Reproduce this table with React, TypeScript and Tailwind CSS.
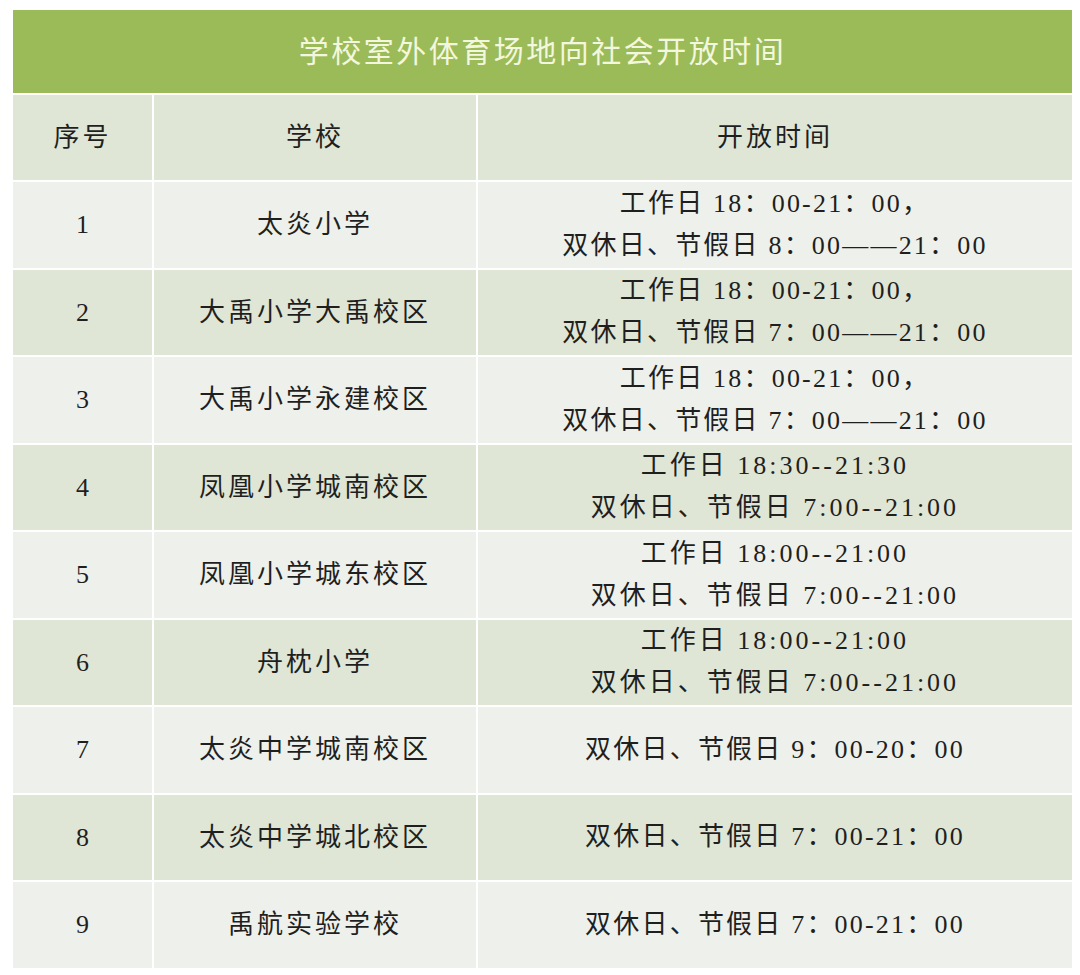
const rows = [
  { no: '1', school: '太炎小学', time: ['工作日 18：00-21：00，', '双休日、节假日 8：00——21：00'] },
  { no: '2', school: '大禹小学大禹校区', time: ['工作日 18：00-21：00，', '双休日、节假日 7：00——21：00'] },
  { no: '3', school: '大禹小学永建校区', time: ['工作日 18：00-21：00，', '双休日、节假日 7：00——21：00'] },
  { no: '4', school: '凤凰小学城南校区', time: ['工作日 18:30--21:30', '双休日、节假日 7:00--21:00'] },
  { no: '5', school: '凤凰小学城东校区', time: ['工作日 18:00--21:00', '双休日、节假日 7:00--21:00'] },
  { no: '6', school: '舟枕小学', time: ['工作日 18:00--21:00', '双休日、节假日 7:00--21:00'] },
  { no: '7', school: '太炎中学城南校区', time: ['双休日、节假日 9：00-20：00'] },
  { no: '8', school: '太炎中学城北校区', time: ['双休日、节假日 7：00-21：00'] },
  { no: '9', school: '禹航实验学校', time: ['双休日、节假日 7：00-21：00'] },
];

const font = { fontFamily: '"Liberation Serif", "Noto Sans CJK SC", serif' };

export default function App() {
  return (
    <div className="min-h-[975px] w-[1080px] bg-white pt-[10px] pl-[13px]" style={font}>
      <div className="w-[1059px]">
        {/* Title bar */}
        <div className="flex h-[83px] items-center justify-center bg-[#9bbb59] text-[30px] tracking-[2.5px] text-[#f3f7de]">
          学校室外体育场地向社会开放时间
        </div>

        <div className="mt-[2px] grid grid-cols-[139px_322px_594px] gap-[2px] text-[26px] text-[#1f1f1f]">
          {/* Header */}
          <div className="flex h-[85px] items-center justify-center bg-[#dfe6d5] tracking-[3px]">序号</div>
          <div className="flex h-[85px] items-center justify-center bg-[#dfe6d5] tracking-[3px]">学校</div>
          <div className="flex h-[85px] items-center justify-center bg-[#dfe6d5] tracking-[3px]">开放时间</div>

          {rows.map((row, i) => {
            const bg = i % 2 === 0 ? 'bg-[#eef1eb]' : 'bg-[#dfe6d5]';
            const wide = row.time.some((t) => t.includes('：'));
            return [
              <div key={row.no + 'a'} className={`flex h-[85.5px] items-center justify-center ${bg}`}>
                {row.no}
              </div>,
              <div key={row.no + 'b'} className={`flex h-[85.5px] items-center justify-center tracking-[3px] ${bg}`}>
                {row.school}
              </div>,
              <div
                key={row.no + 'c'}
                className={`flex h-[85.5px] flex-col items-center justify-center leading-[42px] ${
                  wide ? 'tracking-[2.2px]' : 'tracking-[3px]'
                } ${bg}`}
              >
                {row.time.map((t) => (
                  <span key={t} className="whitespace-pre">{t}</span>
                ))}
              </div>,
            ];
          })}
        </div>
      </div>
    </div>
  );
}
